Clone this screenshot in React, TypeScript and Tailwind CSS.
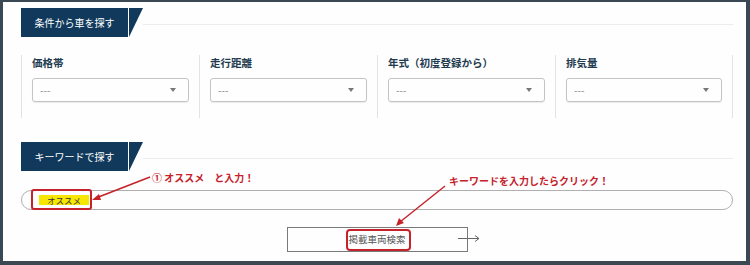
const jp = { fontFamily: '"Noto Sans CJK JP", "Noto Sans", sans-serif' }

function SectionHeader({ title }: { title: string }) {
  return (
    <div className="flex h-[29px]">
      <div className="flex w-[107px] items-center justify-center bg-[#10395b] text-[10px] text-white">
        {title}
      </div>
      <svg width="15" height="29" className="shrink-0">
        <polygon points="1,0 15,0 1,29" fill="#10395b" />
      </svg>
      <div className="mt-[16px] h-px flex-1 self-start bg-[#ececec]" />
    </div>
  )
}

function Field({ label, last }: { label: string; last?: boolean }) {
  return (
    <div className={`h-[63px] border-l border-[#e3e3e3] px-[10px] pt-[1px] ${last ? 'border-r' : ''}`}>
      <div className="text-[10.5px] font-bold leading-[14px] text-[#213a4e]">{label}</div>
      <div className="mt-[8px] flex h-[24px] items-center justify-between rounded-[3px] border border-[#c4c4c4] pl-[7px] pr-[12px] shadow-[0_1px_1px_rgba(0,0,0,0.08)]">
        <span className="text-[10px] leading-none text-[#888]">---</span>
        <svg width="6" height="4">
          <polygon points="0,0 6,0 3,4" fill="#777" />
        </svg>
      </div>
    </div>
  )
}

export default function App() {
  return (
    <div
      className="relative h-[265px] w-[750px] border-t-2 border-r-[4px] border-b-[4px] border-l-[3px] border-[#3a4853] bg-[#fefefe] pt-[6px] pr-[13px] pl-[18px]"
      style={jp}
    >
      <SectionHeader title="条件から車を探す" />

      <div className="mt-[18px] grid grid-cols-4">
        <Field label="価格帯" />
        <Field label="走行距離" />
        <Field label="年式（初度登録から）" />
        <Field label="排気量" last />
      </div>

      <div className="mt-[24px]">
        <SectionHeader title="キーワードで探す" />
      </div>

      <div className="mt-[19px] flex h-[20px] items-center rounded-full border border-[#b0b0b0] pl-[17px]">
        <span className="bg-[#f7e600] px-[8px] text-[8.5px] leading-[10px] text-[#333]">オススメ</span>
      </div>

      <div className="mt-[17px] flex justify-center">
        <div className="flex h-[25px] w-[181px] items-center justify-center border border-[#7a7a7a] text-[9.5px] text-[#555]">
          掲載車両検索
        </div>
      </div>

      {/* annotations */}
      <div className="absolute top-[187px] left-[28px] h-[21px] w-[61px] rounded-[3px] border-2 border-[#c5222a]" />
      <div className="absolute top-[227px] left-[343px] h-[22px] w-[65px] rounded-[4px] border-2 border-[#c5222a]" />

      <div className="absolute top-[169px] left-[149px] text-[10px] font-bold leading-[14px] text-[#c5222a]">
        ① オススメ　と入力！
      </div>
      <div className="absolute top-[172px] left-[446px] text-[10px] font-bold leading-[14px] text-[#c5222a]">
        キーワードを入力したらクリック！
      </div>

      <svg className="pointer-events-none absolute top-[-2px] left-[-3px]" width="750" height="265">
        <line x1="150" y1="177" x2="96" y2="198" stroke="#c5222a" strokeWidth="1.5" />
        <polygon points="92,200 99,194 101,200" fill="#c5222a" />
        <line x1="445" y1="186" x2="400" y2="222" stroke="#c5222a" strokeWidth="1.5" />
        <polygon points="396,226 399,218 404,223" fill="#c5222a" />
        <line x1="458" y1="238.5" x2="479" y2="238.5" stroke="#666" strokeWidth="1" />
        <polyline points="475,235.5 479,238.5 475,241.5" fill="none" stroke="#666" strokeWidth="1" />
      </svg>
    </div>
  )
}
